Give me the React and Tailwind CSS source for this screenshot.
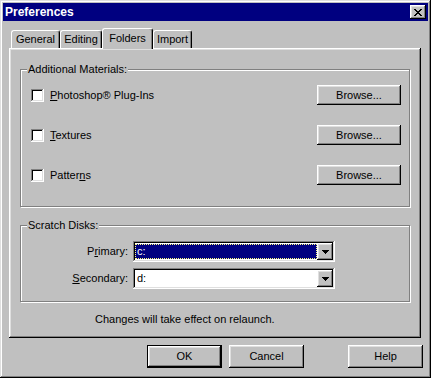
import React from "react";

const raised =
  "shadow-[inset_-1px_-1px_#000,inset_1px_1px_#fff,inset_-2px_-2px_#808080,inset_2px_2px_#dfdfdf]";
const sunken =
  "shadow-[inset_-1px_-1px_#fff,inset_1px_1px_#808080,inset_-2px_-2px_#dfdfdf,inset_2px_2px_#000]";

function CloseGlyph() {
  const px = [
    [0, 0], [1, 0], [6, 0], [7, 0],
    [1, 1], [2, 1], [5, 1], [6, 1],
    [2, 2], [3, 2], [4, 2], [5, 2],
    [3, 3], [4, 3],
    [2, 4], [3, 4], [4, 4], [5, 4],
    [1, 5], [2, 5], [5, 5], [6, 5],
    [0, 6], [1, 6], [6, 6], [7, 6],
  ];
  return (
    <svg width="8" height="7" viewBox="0 0 8 7" shapeRendering="crispEdges">
      {px.map(([x, y]) => (
        <rect key={`${x}-${y}`} x={x} y={y} width="1" height="1" fill="#000" />
      ))}
    </svg>
  );
}

function DownArrow() {
  return (
    <svg width="7" height="4" viewBox="0 0 7 4" shapeRendering="crispEdges">
      <rect x="0" y="0" width="7" height="1" fill="#000" />
      <rect x="1" y="1" width="5" height="1" fill="#000" />
      <rect x="2" y="2" width="3" height="1" fill="#000" />
      <rect x="3" y="3" width="1" height="1" fill="#000" />
    </svg>
  );
}

function Tab({ label, selected, className }) {
  return (
    <div
      className={`${className} ${
        selected ? "relative z-10 h-[21px] -mb-px pt-[3px]" : "h-[18px] pt-[2px]"
      } bg-[#c0c0c0] border-t border-l border-white border-r border-r-black rounded-t-[3px] shadow-[inset_-1px_0_#808080] text-center`}
    >
      {label}
    </div>
  );
}

function Checkbox() {
  return <div className={`w-[13px] h-[13px] bg-white ${sunken}`} />;
}

function Button({ children, className = "" }) {
  return (
    <div className={`flex items-center justify-center bg-[#c0c0c0] ${raised} ${className}`}>
      {children}
    </div>
  );
}

function CheckRow({ children }) {
  return (
    <div className="h-[20px] flex items-center justify-between pl-[10px] pr-[8px]">
      <div className="flex items-center gap-[6px]">
        <Checkbox />
        <span>{children}</span>
      </div>
      <Button className="w-[84px] h-[20px]">Browse...</Button>
    </div>
  );
}

function Combo({ value, selected }) {
  return (
    <div className={`h-[21px] w-[202px] bg-white p-[2px] flex ${sunken}`}>
      <div className="flex-1 flex items-center">
        {selected ? (
          <div className="w-full h-[15px] bg-[#000080] text-white border border-dotted border-[#ffff80] pl-px leading-[13px]">
            {value}
          </div>
        ) : (
          <span className="pl-[2px]">{value}</span>
        )}
      </div>
      <Button className="w-[16px] h-[17px]">
        <DownArrow />
      </Button>
    </div>
  );
}

export default function App() {
  return (
    <div className="w-[431px] h-[378px] bg-[#c0c0c0] p-[3px] flex flex-col text-[11px] leading-[13px] text-black font-['Liberation_Sans',Arial,sans-serif] shadow-[inset_-1px_-1px_#000,inset_1px_1px_#dfdfdf,inset_-2px_-2px_#808080,inset_2px_2px_#fff]">
      <div className="h-[18px] bg-[#000080] flex items-center justify-between pl-[2px] pr-[2px]">
        <span className="text-white font-bold text-[12px]">Preferences</span>
        <Button className="w-[16px] h-[14px]">
          <CloseGlyph />
        </Button>
      </div>

      <div className="mt-[7px] ml-[6px] flex flex-col">
        <div className="flex items-end pl-[2px]">
          <Tab label="General" className="w-[49px]" />
          <Tab label="Editing" className="w-[42px]" />
          <Tab label="Folders" selected className="w-[51px]" />
          <Tab label="Import" className="w-[39px]" />
        </div>

        <div
          className={`w-[412px] h-[290px] pt-[15px] px-[11px] shadow-[inset_-1px_-1px_#000,inset_1px_1px_#fff,inset_-2px_-2px_#808080,inset_2px_2px_#dfdfdf]`}
        >
          <fieldset className="border border-[#808080] shadow-[inset_1px_1px_#fff,1px_1px_#fff]">
            <legend className="ml-[6px] px-px bg-[#c0c0c0]">Additional Materials:</legend>
            <div className="pt-[9px] pb-[21px] flex flex-col gap-[20px]">
              <CheckRow>
                <span className="underline">P</span>hotoshop® Plug-Ins
              </CheckRow>
              <CheckRow>
                <span className="underline">T</span>extures
              </CheckRow>
              <CheckRow>
                Patter<span className="underline">n</span>s
              </CheckRow>
            </div>
          </fieldset>

          <fieldset className="mt-[12px] border border-[#808080] shadow-[inset_1px_1px_#fff,1px_1px_#fff]">
            <legend className="ml-[6px] px-px bg-[#c0c0c0]">Scratch Disks:</legend>
            <div className="pt-[9px] pb-[12px] grid grid-cols-[107px_202px] gap-x-[5px] gap-y-[6px] items-center">
              <span className="text-right">
                P<span className="underline">r</span>imary:
              </span>
              <Combo value="c:" selected />
              <span className="text-right">
                <span className="underline">S</span>econdary:
              </span>
              <Combo value="d:" />
            </div>
          </fieldset>

          <p className="mt-[11px] ml-[75px]">Changes will take effect on relaunch.</p>
        </div>
      </div>

      <div className="mt-[7px] flex">
        <div className="ml-[144px] w-[75px] h-[23px] border border-black">
          <Button className="w-full h-full">OK</Button>
        </div>
        <Button className="ml-[7px] w-[75px] h-[23px]">Cancel</Button>
        <Button className="ml-[44px] w-[75px] h-[23px]">Help</Button>
      </div>
    </div>
  );
}
